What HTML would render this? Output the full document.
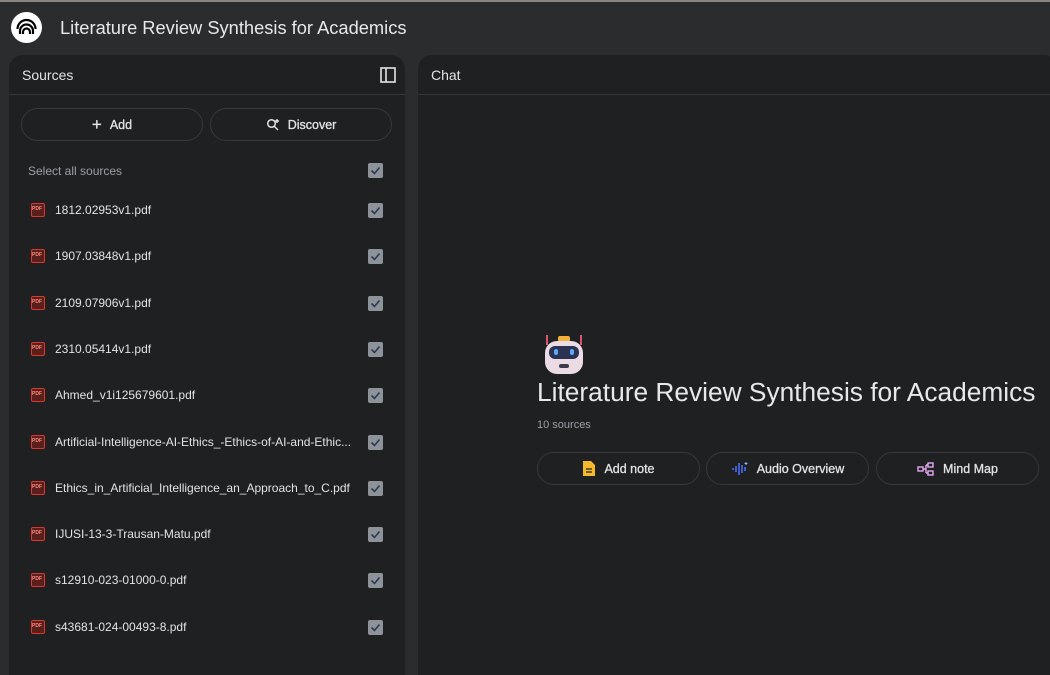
<!DOCTYPE html>
<html><head><meta charset="utf-8"><style>
*{box-sizing:border-box;margin:0;padding:0}
body{width:1050px;height:668px;overflow:hidden;background:#2b2c2e;font-family:"Liberation Sans",sans-serif;color:#e3e3e3;position:relative}
.top{position:absolute;left:0;top:0;width:1050px;height:2px;background:#8a8580}
.logo{position:absolute;left:11px;top:12px;width:31px;height:31px;border-radius:50%;background:#fff}
.title{position:absolute;left:60px;top:17px;font-size:18.3px;color:#e8e8e8}
.panel{position:absolute;top:55px;background:#1f2022;border-radius:14px 14px 0 0}
.ph{height:40px;border-bottom:1px solid #34363a;font-size:14px;padding:12px 13px}
.btn{position:absolute;height:33px;border:1px solid #36383c;border-radius:17px;font-size:12.5px;display:flex;align-items:center;justify-content:center;gap:8px;color:#e3e3e3;-webkit-text-stroke:0.3px #e3e3e3}
.cb{position:absolute;left:359px;width:15px;height:15px;background:#8e939a;border-radius:2px}
.cb svg{position:absolute;left:2px;top:2px}
.row{position:absolute;left:0;width:395px;height:20px}
.pdf{position:absolute;left:22px;top:3px;width:14px;height:14px;border:1.5px solid #d9392e;border-radius:2px;background:#5a1f1b}
.pdf:after{content:"PDF";position:absolute;left:0;top:2px;font-size:5px;color:#ff8a80;font-weight:bold}
.fn{position:absolute;left:46px;top:3px;font-size:12px;color:#e3e3e3;white-space:nowrap}
</style></head><body>
<div class="top"></div>
<div class="logo"><svg width="31" height="31" viewBox="0 0 31 31"><path d="M9 22v-3a6.5 6.5 0 0 1 13 0v3M12 22v-2a3.5 3.5 0 0 1 7 0v2M6.5 17a9 9 0 0 1 18 0" fill="none" stroke="#000" stroke-width="2.2"/></svg></div>
<div class="title">Literature Review Synthesis for Academics</div>

<div class="panel" style="left:9px;width:396px;height:620px">
<div class="ph">Sources<svg style="position:absolute;left:371px;top:12px" width="16" height="16" viewBox="0 0 16 16"><rect x="1" y="1" width="14" height="14" fill="none" stroke="#e3e3e3" stroke-width="1.6"/><line x1="6" y1="1" x2="6" y2="15" stroke="#e3e3e3" stroke-width="1.6"/></svg></div>
<div class="btn" style="left:12px;top:53px;width:182px"><span style="font-size:17px;font-weight:normal">+</span>Add</div>
<div class="btn" style="left:201px;top:53px;width:182px"><svg width="14" height="14" viewBox="0 0 14 14"><circle cx="5.5" cy="5.5" r="3.8" fill="none" stroke="#e3e3e3" stroke-width="1.5"/><path d="M8.5 8.5l3.5 3.5M11 1v4M9 3h4" stroke="#e3e3e3" stroke-width="1.4"/></svg>Discover</div>
<div style="position:absolute;left:19px;top:109px;font-size:12px;color:#9aa0a6">Select all sources</div>
<div class="cb" style="top:108px"><svg width="11" height="11" viewBox="0 0 11 11"><path d="M1.5 5.5l3 3 5-6" fill="none" stroke="#2c3a55" stroke-width="1.6"/></svg></div>
</div>

<div id="rows"></div>

<div class="panel" style="left:418px;width:640px;height:620px">
<div class="ph">Chat</div>
</div>

<svg style="position:absolute;left:542px;top:333px" width="44" height="44" viewBox="0 0 44 44">
<line x1="5" y1="2" x2="5" y2="12" stroke="#e0526e" stroke-width="2"/><line x1="39" y1="2" x2="39" y2="12" stroke="#e0526e" stroke-width="2"/>
<rect x="16" y="3" width="12" height="6" rx="2" fill="#f2b13a"/>
<rect x="3" y="8" width="38" height="33" rx="12" fill="#eadbe5"/>
<rect x="7" y="13" width="30" height="13" rx="6" fill="#2b3350"/>
<rect x="12" y="16" width="4" height="6" rx="2" fill="#5aa8ff"/><rect x="28" y="16" width="4" height="6" rx="2" fill="#5aa8ff"/>
<rect x="17" y="31" width="10" height="4" rx="2" fill="#3c3a4a"/></svg>
<div style="position:absolute;left:537px;top:377px;font-size:26.3px;color:#e8e8e8">Literature Review Synthesis for Academics</div>
<div style="position:absolute;left:537px;top:419px;font-size:11px;color:#9aa0a6">10 sources</div>
<div class="btn" style="left:537px;top:452px;width:163px"><svg width="14" height="17" viewBox="0 0 14 17"><path d="M1 1h8l4 4v11H1z" fill="#f6b92b"/><path d="M4 9h6M4 12h6" stroke="#1f2022" stroke-width="1.3"/></svg>Add note</div>
<div class="btn" style="left:706px;top:452px;width:163px"><svg width="18" height="16" viewBox="0 0 18 16"><path d="M2 7v2M5 5v6M8 2v12M11 4v8M14 6v4" stroke="#4a6cf7" stroke-width="1.6"/><path d="M15 1v3M13.5 2.5h3" stroke="#8ab4f8" stroke-width="1"/></svg>Audio Overview</div>
<div class="btn" style="left:876px;top:452px;width:163px"><svg width="18" height="14" viewBox="0 0 18 14"><rect x="1" y="5" width="5" height="4" fill="none" stroke="#e3a8f0" stroke-width="1.4"/><rect x="11" y="1" width="5" height="4" fill="none" stroke="#e3a8f0" stroke-width="1.4"/><rect x="11" y="9" width="5" height="4" fill="none" stroke="#e3a8f0" stroke-width="1.4"/><path d="M6 7h3M9 3v8M9 3h2M9 11h2" fill="none" stroke="#e3a8f0" stroke-width="1.4"/></svg>Mind Map</div>

<script>
var f=["1812.02953v1.pdf","1907.03848v1.pdf","2109.07906v1.pdf","2310.05414v1.pdf","Ahmed_v1i125679601.pdf","Artificial-Intelligence-AI-Ethics_-Ethics-of-AI-and-Ethic...","Ethics_in_Artificial_Intelligence_an_Approach_to_C.pdf","IJUSI-13-3-Trausan-Matu.pdf","s12910-023-01000-0.pdf","s43681-024-00493-8.pdf"];
var h="";f.forEach(function(n,i){var y=200+i*46.3;h+='<div class="row" style="top:'+y+'px;left:9px"><div class="pdf"></div><div class="fn">'+n+'</div><div class="cb" style="top:3px"><svg width="11" height="11" viewBox="0 0 11 11"><path d="M1.5 5.5l3 3 5-6" fill="none" stroke="#2c3a55" stroke-width="1.6"/></svg></div></div>';});
document.getElementById("rows").innerHTML=h;
</script>
</body></html>
